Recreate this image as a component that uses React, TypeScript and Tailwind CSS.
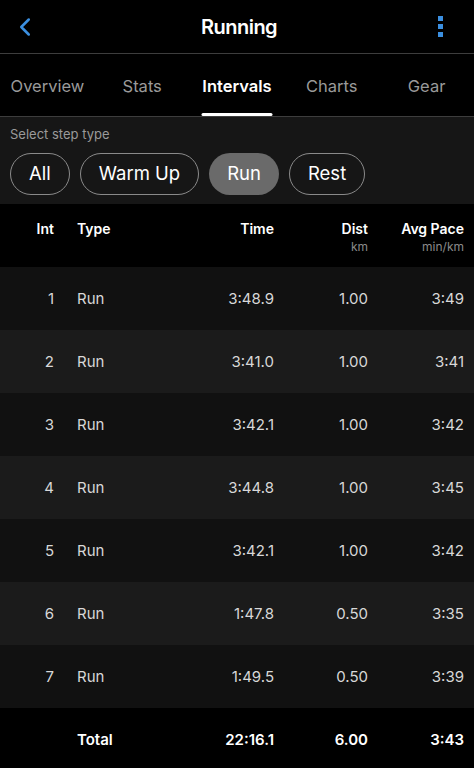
import { ChevronLeft } from "lucide-react";

const rows = [
  { int: 1, time: "3:48.9", dist: "1.00", pace: "3:49" },
  { int: 2, time: "3:41.0", dist: "1.00", pace: "3:41" },
  { int: 3, time: "3:42.1", dist: "1.00", pace: "3:42" },
  { int: 4, time: "3:44.8", dist: "1.00", pace: "3:45" },
  { int: 5, time: "3:42.1", dist: "1.00", pace: "3:42" },
  { int: 6, time: "1:47.8", dist: "0.50", pace: "3:35" },
  { int: 7, time: "1:49.5", dist: "0.50", pace: "3:39" },
];

const tabs = ["Overview", "Stats", "Intervals", "Charts", "Gear"];
const pills = ["All", "Warm Up", "Run", "Rest"];

export default function App() {
  return (
    <div
      className="w-[474px] h-[768px] overflow-hidden bg-black text-white"
      style={{ fontFamily: "Inter, 'Noto Sans', sans-serif" }}
    >
      {/* Top bar */}
      <header className="h-[54px] flex items-center justify-between px-3 border-b border-[#3d3d3d]">
        <ChevronLeft size={30} strokeWidth={2} className="text-[#3b8fe0] -ml-0.5" />
        <h1 className="text-[20px] font-semibold tracking-tight">Running</h1>
        <div className="flex flex-col gap-[3px] mr-[19px]">
          <span className="w-[5px] h-[5px] bg-[#3b8fe0]"></span>
          <span className="w-[5px] h-[5px] bg-[#3b8fe0]"></span>
          <span className="w-[5px] h-[5px] bg-[#3b8fe0]"></span>
        </div>
      </header>

      {/* Tabs */}
      <nav className="h-[63px] flex border-b border-[#3d3d3d]">
        {tabs.map((t) => (
          <div
            key={t}
            className={`flex-1 relative flex items-center justify-center pt-[2px] text-[16.5px] ${
              t === "Intervals" ? "text-white font-semibold" : "text-[#9a9a9a]"
            }`}
          >
            {t}
            {t === "Intervals" && (
              <span className="absolute bottom-0 left-1/2 -translate-x-1/2 w-[71px] h-[3px] bg-white rounded-sm"></span>
            )}
          </div>
        ))}
      </nav>

      {/* Step type filter */}
      <section className="bg-[#161616] h-[87px] px-[10px] pt-[9px]">
        <p className="text-[13px] text-[#9a9a9a] leading-4">Select step type</p>
        <div className="flex gap-[10px] mt-[11px]">
          {pills.map((p) => (
            <span
              key={p}
              className={`h-[42px] flex items-center rounded-full text-[18.5px] text-white px-[18px] ${
                p === "Run" ? "bg-[#6a6a6a]" : "border border-[#8a8a8a]"
              }`}
            >
              {p}
            </span>
          ))}
        </div>
      </section>

      {/* Table header */}
      <div className="h-[63px] grid grid-cols-[54px_1fr_90px_94px_96px] pr-[10px] pt-[14px] text-[14px] font-semibold">
        <span className="text-right">Int</span>
        <span className="pl-[23px]">Type</span>
        <span className="text-right">Time</span>
        <span className="text-right flex flex-col items-end">
          Dist
          <span className="text-[12px] font-normal text-[#8a8a8a] -mt-[1px]">km</span>
        </span>
        <span className="text-right flex flex-col items-end">
          Avg Pace
          <span className="text-[12px] font-normal text-[#8a8a8a] -mt-[1px]">min/km</span>
        </span>
      </div>

      {/* Rows */}
      {rows.map((r, i) => (
        <div
          key={r.int}
          className={`h-[63px] grid grid-cols-[54px_1fr_90px_94px_96px] pr-[10px] pt-[2px] items-center text-[15px] text-[#d8d8d8] ${
            i % 2 === 0 ? "bg-[#111111]" : "bg-[#1b1b1b]"
          }`}
        >
          <span className="text-right">{r.int}</span>
          <span className="pl-[23px]">Run</span>
          <span className="text-right">{r.time}</span>
          <span className="text-right">{r.dist}</span>
          <span className="text-right">{r.pace}</span>
        </div>
      ))}

      {/* Total */}
      <div className="h-[63px] grid grid-cols-[54px_1fr_90px_94px_96px] pr-[10px] pt-[2px] items-center text-[15px] font-semibold">
        <span></span>
        <span className="pl-[23px]">Total</span>
        <span className="text-right">22:16.1</span>
        <span className="text-right">6.00</span>
        <span className="text-right">3:43</span>
      </div>
    </div>
  );
}
